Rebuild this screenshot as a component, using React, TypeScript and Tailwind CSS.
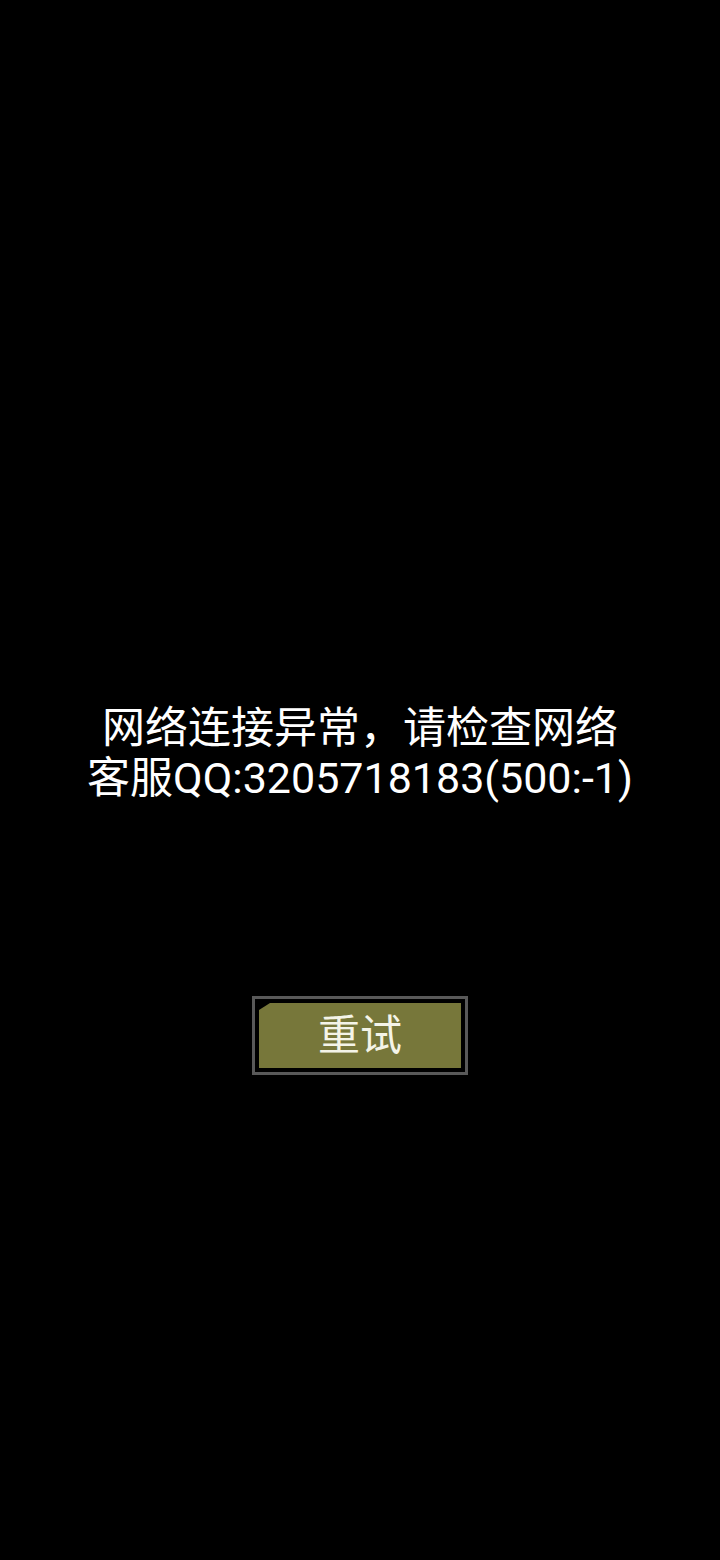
export default function App() {
  return (
    <div className="w-[720px] h-[1560px] bg-black flex flex-col items-center" style={{ fontFamily: 'Roboto, "Noto Sans CJK SC", sans-serif' }}>
      <div className="mt-[703px] text-center text-white text-[43px] leading-[50px]">
        <p>网络连接异常，请检查网络</p>
        <p>客服QQ:3205718183(500:-1)</p>
      </div>
      <button
        type="button"
        className="mt-[193px] w-[216px] h-[79px] border-[3px] border-[#595959] bg-black p-[4px] flex"
      >
        <span className="flex-1 flex items-center justify-center bg-[#77773a] text-[#f4f4e8] text-[42px] leading-none [clip-path:polygon(11px_0,100%_0,100%_100%,0_100%,0_7px)]">
          重试
        </span>
      </button>
    </div>
  );
}
